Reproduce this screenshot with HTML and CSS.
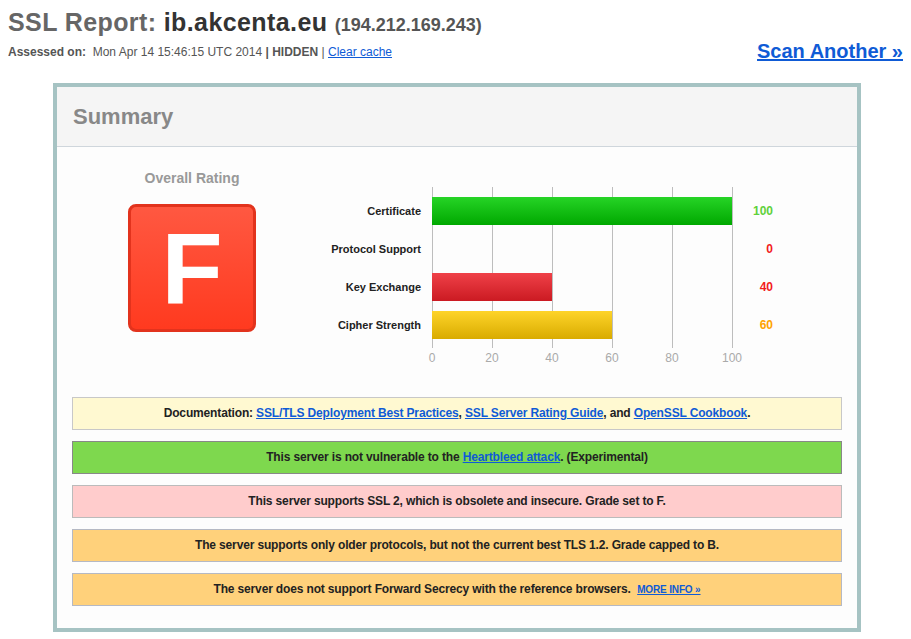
FILE: index.html
```html
<!DOCTYPE html>
<html lang="en">
<head>
  <meta charset="UTF-8">
  <title>SSL Server Test: ib.akcenta.eu</title>
  <link rel="stylesheet" href="styles.css">
</head>
<body>

<div class="top">
  <div>
    <h1><span class="label">SSL Report:</span> ib.akcenta.eu <span class="ip">(194.212.169.243)</span></h1>
    <div class="meta">
      <b>Assessed on:</b>&nbsp; Mon Apr 14 15:46:15 UTC 2014 <b>| HIDDEN</b> | <a href="#">Clear cache</a>
    </div>
  </div>
  <a class="scan" href="#">Scan Another &raquo;</a>
</div>

<div class="report">
  <div class="report-head">Summary</div>

  <div class="summary">
    <div class="rating">
      <div class="rating-title">Overall Rating</div>
      <div class="grade">F</div>
    </div>

    <div class="chart">
      <div class="chart-main">
        <div class="chart-labels">
          <div>Certificate</div>
          <div>Protocol Support</div>
          <div>Key Exchange</div>
          <div>Cipher Strength</div>
        </div>
        <div class="chart-plot">
          <div class="bar bar-green" style="width: 300px"></div>
          <div class="bar" style="width: 0"></div>
          <div class="bar bar-red" style="width: 120px"></div>
          <div class="bar bar-yellow" style="width: 180px"></div>
        </div>
        <div class="chart-scores">
          <div class="score-green">100</div>
          <div class="score-red">0</div>
          <div class="score-red">40</div>
          <div class="score-orange">60</div>
        </div>
      </div>
      <div class="axis">
        <span>0</span><span>20</span><span>40</span><span>60</span><span>80</span><span>100</span>
      </div>
    </div>
  </div>

  <div class="notices">
    <div class="notice notice-doc">
      Documentation: <a href="#">SSL/TLS Deployment Best Practices</a>, <a href="#">SSL Server Rating Guide</a>, and <a href="#">OpenSSL Cookbook</a>.
    </div>
    <div class="notice notice-good">
      This server is not vulnerable to the <a href="#">Heartbleed attack</a>. (Experimental)
    </div>
    <div class="notice notice-error">
      This server supports SSL 2, which is obsolete and insecure. Grade set to F.
    </div>
    <div class="notice notice-warn">
      The server supports only older protocols, but not the current best TLS 1.2. Grade capped to B.
    </div>
    <div class="notice notice-warn">
      The server does not support Forward Secrecy with the reference browsers. &nbsp;<a class="more" href="#">MORE INFO &raquo;</a>
    </div>
  </div>
</div>

</body>
</html>
```

FILE: styles.css
```css
body {
  margin: 8px;
  font-family: "Liberation Sans", Arial, sans-serif;
  background-color: #ffffff;
  color: #333;
}

a {
  color: #0f5bd6;
}

.top {
  display: flex;
  justify-content: space-between;
  align-items: flex-end;
}

h1 {
  margin: 0;
  font-size: 25px;
  line-height: 28px;
  letter-spacing: 0.4px;
  color: #333;
}

h1 .label {
  color: #666;
}

h1 .ip {
  font-size: 18px;
  letter-spacing: 0;
  color: #555;
}

.meta {
  margin-top: 6px;
  font-size: 12px;
  color: #555;
}

.meta b {
  color: #555;
}

.scan {
  font-size: 20px;
  font-weight: bold;
  color: #0f5bd6;
  margin-bottom: -4px;
}

.report {
  width: 800px;
  margin: 24px 0 0 45px;
  border: 4px solid #a6c3c3;
  background-color: #fdfdfd;
  padding-bottom: 22px;
}

.report-head {
  height: 59px;
  line-height: 60px;
  padding-left: 16px;
  background-color: #f5f5f5;
  border-bottom: 1px solid #cfd6dc;
  font-size: 22px;
  font-weight: bold;
  color: #888;
}

.summary {
  display: flex;
}

.rating {
  width: 270px;
  padding-top: 23px;
  display: flex;
  flex-direction: column;
  align-items: center;
}

.rating-title {
  font-size: 14px;
  line-height: 16px;
  font-weight: bold;
  color: #999;
}

.grade {
  margin-top: 18px;
  width: 122px;
  height: 122px;
  border: 3px solid #e2331d;
  border-radius: 8px;
  background: linear-gradient(#ff5841, #ff3a1f);
  color: #fff;
  font-size: 100px;
  font-weight: bold;
  line-height: 122px;
  text-align: center;
}

.chart {
  margin-top: 40px;
}

.chart-main {
  display: flex;
}

.chart-labels,
.chart-scores {
  display: flex;
  flex-direction: column;
  gap: 10px;
  padding-top: 10px;
}

.chart-labels div,
.chart-scores div {
  height: 28px;
  line-height: 28px;
  font-weight: bold;
  text-align: right;
}

.chart-labels {
  width: 94px;
  margin-right: 11px;
  font-size: 11px;
  color: #222;
}

.chart-scores {
  width: 40px;
  font-size: 12px;
}

.score-green { color: #5fd13b; }
.score-red { color: #f21d1d; }
.score-orange { color: #ffa200; }

.chart-plot {
  width: 301px;
  padding: 10px 0 9px;
  display: flex;
  flex-direction: column;
  gap: 10px;
  background: repeating-linear-gradient(to right, #bdbdbd 0 1px, transparent 1px 60px);
}

.bar {
  height: 28px;
}

.bar-green { background: linear-gradient(#26d426, #00a800); }
.bar-red { background: linear-gradient(#ef4148, #cb1a22); }
.bar-yellow { background: linear-gradient(#fed42a, #d9ab00); }

.axis {
  display: flex;
  margin: 2px 0 0 75px;
  font-size: 12px;
  line-height: 16px;
  color: #aaa;
}

.axis span {
  width: 60px;
  text-align: center;
}

.notices {
  margin: 31px 15px 0;
  display: flex;
  flex-direction: column;
  gap: 11px;
}

.notice {
  height: 31px;
  line-height: 31px;
  border: 1px solid #bbb;
  text-align: center;
  font-size: 12px;
  letter-spacing: -0.15px;
  font-weight: bold;
  color: #222;
}

.notice-doc {
  background-color: #fff9d1;
  border-color: #c8c8c8;
}

.notice-good {
  background-color: #7ed84e;
  border-color: #888;
}

.notice-error {
  background-color: #ffcccc;
  border-color: #bbb;
}

.notice-warn {
  background-color: #ffd17b;
  border-color: #b5b9c4;
}

.more {
  font-size: 10px;
}
```
